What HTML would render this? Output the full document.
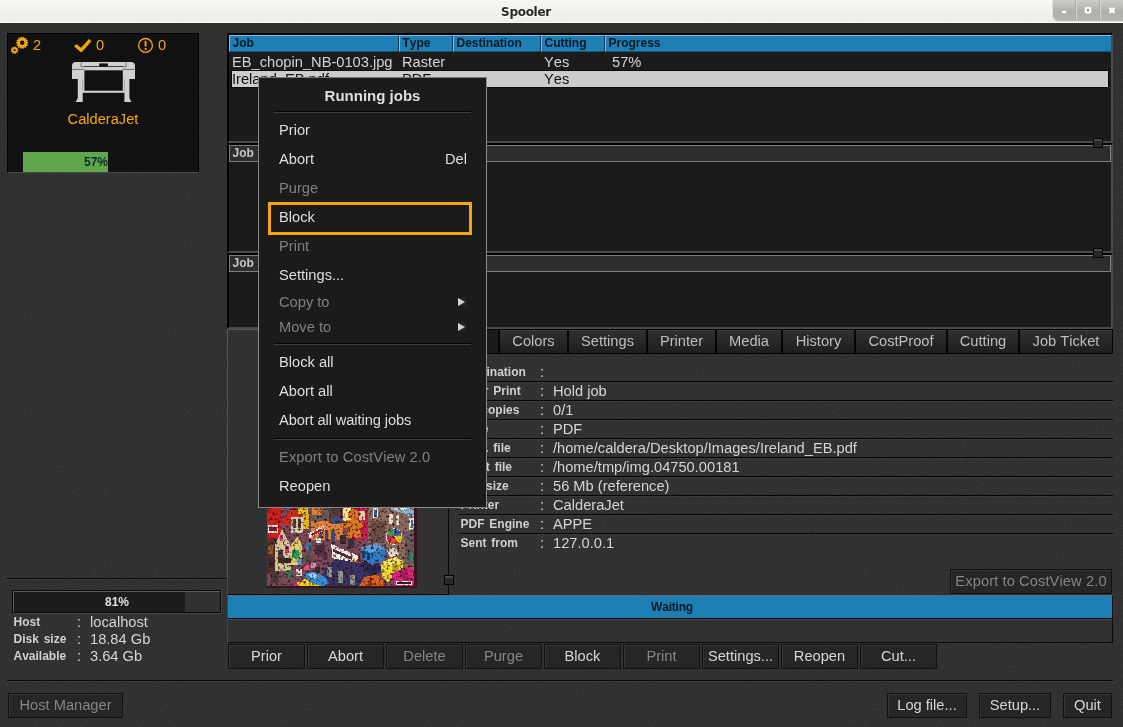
<!DOCTYPE html>
<html>
<head>
<meta charset="utf-8">
<title>Spooler</title>
<style>
*{box-sizing:border-box;margin:0;padding:0}
html,body{width:1123px;height:727px;overflow:hidden}
html{background:#2d2e2f}
body{font-kerning:none;position:relative;background:transparent;will-change:transform;font-family:"Liberation Sans",sans-serif;font-size:14.67px;color:#d4d4d4}
.abs{position:absolute}
.tex{background-color:#2d2e2f}
#titlebar{position:absolute;left:0;top:0;width:1123px;height:23px;background:linear-gradient(#f6f6f4,#ededea);border-bottom:1px solid #fbfbfb}
#title{position:absolute;left:0;width:1052px;top:4px;height:16px;line-height:16px;text-align:center;font-family:"DejaVu Sans","Liberation Sans",sans-serif;font-weight:bold;font-size:12px;color:#262626;letter-spacing:-.3px;text-shadow:0 1px 0 #fff}
#winbtns{position:absolute;left:1052px;top:0;width:71px;height:22px;background:linear-gradient(#cccbc8,#aeadaa 60%,#bab9b6);border-bottom-left-radius:6px;border-left:1px solid #e2e2e0;border-bottom:1px solid #e2e2e0}
#winbtns i{position:absolute;top:0;width:1px;height:20px;background:#d6d6d4;box-shadow:-1px 0 0 #a9a8a5}
#main{position:absolute;left:0;top:23px;width:1123px;height:704px}
.panel{position:absolute;left:227px;width:886px;background:#1b1b1b;border:2px solid #000;border-right-color:#4b4b4b;border-bottom-color:#4b4b4b}
.hdr{position:absolute;height:17px;font-weight:bold;font-size:12px;line-height:14px;padding-left:2.5px;white-space:nowrap;overflow:hidden}
.hdr.blue{background:#1d7fb4;color:#0a1a27;border-top:1px solid #79c0e8;border-left:1px solid #79c0e8;border-right:1px solid #0c3a56;border-bottom:1px solid #12587f}
.hdr.gray{background:#2d2d2d;color:#c4c4c4;border:1px solid #7d7d7d;line-height:14px}
.cell{position:absolute;white-space:nowrap;line-height:17px;height:17px}
.handle{position:absolute;width:10px;height:10px;background:#282828;border:1px solid #050505;box-shadow:inset 0 2px 0 #484848}
.btn{position:absolute;height:25px;border:1px solid #111;background:#262626;color:#d6d6d6;line-height:22px;text-align:center;box-shadow:inset 1px 1px 0 #363636;white-space:nowrap}
.btn.dis{color:#858585}
.tab{position:absolute;top:329px;height:25px;border:1px solid #050505;background:linear-gradient(#303030,#1e1e1e);color:#bdbdbd;line-height:22px;text-align:center;box-shadow:inset 0 1px 0 #3c3c3c;white-space:nowrap}
.irow{position:absolute;left:459px;width:654px;height:19px;border-bottom:1px solid #050505;box-shadow:0 1px 0 #3a3a3a}
.irow b{word-spacing:1.5px;position:absolute;left:1.5px;top:2px;font-size:12px;line-height:15px;color:#cfcfcf;white-space:nowrap}
.irow i{position:absolute;left:81px;top:0;font-style:normal;line-height:19px}
.irow span{position:absolute;left:94px;top:0;line-height:19px;white-space:nowrap}
.hl{position:absolute;height:2px;background:#0a0a0a;border-bottom:1px solid #3b3b3b}
#menu{position:absolute;left:258px;top:77px;width:229px;height:431px;background:#1b1b1b;border:1px solid #8c8c8c;border-top-color:#777}
.mi{position:absolute;left:20px;color:#dedede;white-space:nowrap;line-height:17px;height:17px}
.mi.dis{color:#808080}
.msep{position:absolute;left:15px;width:197px;height:2px;background:#060606;border-bottom:1px solid #3c3c3c}
.arr{position:absolute;left:199px;width:8px;height:8px;background:#262626}
.arr:before{content:"";position:absolute;left:0;top:0;width:0;height:0;border-left:7px solid #d2d2d2;border-top:4px solid transparent;border-bottom:4px solid transparent}
.hrow{position:absolute;left:13px;height:17px;line-height:17px;white-space:nowrap}
.hrow b{word-spacing:1.5px;position:absolute;left:.5px;top:0;font-size:12px;color:#d0d0d0}
.hrow i{position:absolute;left:64px;top:0;font-style:normal}
.hrow span{position:absolute;left:77px;top:0}
</style>
</head>
<body>
<div id="main" class="tex"><svg width="1123" height="704" style="position:absolute;left:0;top:0"><defs><filter id="bgn" x="0" y="0" width="100%" height="100%" color-interpolation-filters="sRGB"><feTurbulence type="fractalNoise" baseFrequency="0.9" numOctaves="1" seed="4"/><feColorMatrix type="matrix" values="0 0 0 0 1  0 0 0 0 1  0 0 0 0 1  0 0 0 0.14 -0.055"/></filter></defs><rect width="1123" height="704" fill="#000" filter="url(#bgn)"/></svg></div>
<div id="titlebar"><div id="title">Spooler</div>
<div id="winbtns"><i style="left:23px"></i><i style="left:47px"></i>
<svg class="abs" style="left:0;top:0" width="70" height="20" viewBox="0 0 70 20">
<rect x="9" y="10.8" width="4.3" height="2.5" fill="#fff"/>
<rect x="31.8" y="7.2" width="6.4" height="6.2" fill="#fff"/><rect x="34" y="9.2" width="2" height="2" fill="#77767a"/>
<path d="M56.5 7.8 L61.5 12.8 M61.5 7.8 L56.5 12.8" stroke="#fff" stroke-width="2.6" stroke-linecap="butt"/>
</svg>
</div>
</div>

<!-- PRINTER PANEL -->
<div class="abs" id="printer" style="left:7px;top:33px;width:192px;height:140px;background:#111;border:1px solid #040404;border-bottom-color:#4a4a4a"></div>

<svg class="abs" style="left:0;top:23px" width="210" height="160" viewBox="0 23 210 160">
<path d="M28.28 42.25 L28.28 43.35 L26.78 43.85 L27.91 44.94 L27.44 45.93 L25.87 45.73 L26.42 47.21 L25.56 47.89 L24.24 47.03 L24.09 48.60 L23.02 48.84 L22.20 47.50 L21.38 48.84 L20.31 48.60 L20.16 47.03 L18.84 47.89 L17.98 47.21 L18.53 45.73 L16.96 45.93 L16.49 44.94 L17.62 43.85 L16.12 43.35 L16.12 42.25 L17.62 41.75 L16.49 40.66 L16.96 39.67 L18.53 39.87 L17.98 38.39 L18.84 37.71 L20.16 38.57 L20.31 37.00 L21.38 36.76 L22.20 38.10 L23.02 36.76 L24.09 37.00 L24.24 38.57 L25.56 37.71 L26.42 38.39 L25.87 39.87 L27.44 39.67 L27.91 40.66 L26.78 41.75Z M24.40 42.80 A2.2 2.2 0 1 0 20.00 42.80 A2.2 2.2 0 1 0 24.40 42.80Z" fill="#f5a70a" fill-rule="evenodd"/>
<path d="M18.48 49.85 L18.48 50.55 L17.23 51.16 L17.80 52.43 L17.35 52.97 L16.00 52.62 L15.62 53.96 L14.93 54.09 L14.11 52.96 L12.96 53.74 L12.35 53.39 L12.46 52.00 L11.07 51.86 L10.83 51.20 L11.80 50.20 L10.83 49.20 L11.07 48.54 L12.46 48.40 L12.35 47.01 L12.96 46.66 L14.11 47.44 L14.93 46.31 L15.62 46.44 L16.00 47.78 L17.35 47.43 L17.80 47.97 L17.23 49.24Z M15.70 50.20 A1.1 1.1 0 1 0 13.50 50.20 A1.1 1.1 0 1 0 15.70 50.20Z" fill="#f5a70a" fill-rule="evenodd"/>
<path d="M75.2 45.2 L81.2 50.2 L90.2 40.2" fill="none" stroke="#f5a70a" stroke-width="3.4"/>
<circle cx="145.5" cy="45.4" r="6.9" fill="none" stroke="#f5a70a" stroke-width="1.3"/>
<rect x="144.6" y="40.8" width="1.9" height="5.8" fill="#f5a70a"/><rect x="144.6" y="48" width="1.9" height="1.9" fill="#f5a70a"/>
<!-- printer icon -->
<g fill="#d0d0d0">
<path d="M72 79 L72 66 Q72 62 76 62 L84 62 L84 79 Z"/>
<path d="M135 79 L135 66 Q135 62 131 62 L123.3 62 L123.3 79 Z"/>
<path d="M82.3 62 L124.8 62 L125.6 66.2 L81.5 66.2 Z"/>
<rect x="84" y="67" width="39.5" height="3.3"/>
<path d="M77.8 79 L82.7 79 L82.7 102 L75.6 102 L77.8 98 Z"/>
<path d="M129.4 79 L124.4 79 L124.4 102 L131.4 102 L129.4 98 Z"/>
<rect x="82.7" y="70" width="1.7" height="21.5"/>
<rect x="122.8" y="70" width="1.7" height="21.5"/>
<rect x="82" y="90.7" width="43.2" height="2.1"/>
</g>
<rect x="99.2" y="63.4" width="8.7" height="3.2" fill="#111"/>
<rect x="72" y="68.9" width="12.4" height="0.8" fill="#555"/><rect x="122.8" y="68.9" width="12.2" height="0.8" fill="#555"/>
<path d="M81.5 62.4 L80.8 66.6 L84.4 66.6" fill="none" stroke="#555" stroke-width=".7"/>
<path d="M125.6 62.4 L126.3 66.6 L122.8 66.6" fill="none" stroke="#555" stroke-width=".7"/>
</svg>
<div class="abs" style="left:33px;top:37px;color:#f5a70a;line-height:17px">2</div>
<div class="abs" style="left:96px;top:37px;color:#f5a70a;line-height:17px">0</div>
<div class="abs" style="left:158px;top:37px;color:#f5a70a;line-height:17px">0</div>
<div class="abs" style="left:8px;top:111px;width:190px;text-align:center;color:#f5a70a;line-height:17px">CalderaJet</div>
<div class="abs" style="left:23px;top:152px;width:85px;height:20px;background:#60a64d;overflow:hidden"><div class="abs" style="left:61px;top:2px;font-weight:bold;font-size:12px;line-height:16px;color:#0c2a2a;white-space:nowrap">57%</div></div>


<!-- JOB LISTS -->
<div class="panel" style="top:33px;height:110px"></div>
<div class="panel" style="top:143px;height:110px"></div>
<div class="panel" style="top:253px;height:76px"></div>

<div class="hdr blue" style="left:229px;top:35px;width:170px">Job</div>
<div class="hdr blue" style="left:399px;top:35px;width:54px">Type</div>
<div class="hdr blue" style="left:453px;top:35px;width:88px">Destination</div>
<div class="hdr blue" style="left:541px;top:35px;width:64px">Cutting</div>
<div class="hdr blue" style="left:605px;top:35px;width:506px;border-right:none">Progress</div>
<div class="abs" style="left:232px;top:71px;width:876px;height:16px;background:#cccccc;box-shadow:0 0 0 1px #0b0b0b"></div>
<div class="cell" style="left:232px;top:54px">EB_chopin_NB-0103.jpg</div>
<div class="cell" style="left:402px;top:54px">Raster</div>
<div class="cell" style="left:544px;top:54px">Yes</div>
<div class="cell" style="left:612px;top:54px">57%</div>
<div class="cell" style="left:232px;top:71px;color:#111">Ireland_EB.pdf</div>
<div class="cell" style="left:402px;top:71px;color:#111">PDF</div>
<div class="cell" style="left:544px;top:71px;color:#111">Yes</div>
<div class="hdr gray" style="left:229px;top:145px;width:882px">Job</div>
<div class="hdr gray" style="left:229px;top:255px;width:882px">Job</div>
<div class="handle" style="left:1093px;top:138px"></div>
<div class="handle" style="left:1093px;top:248px"></div>


<div class="abs" style="left:227px;top:329px;width:222px;height:266px;border-left:1px solid #555;border-top:1px solid #555;border-bottom:1px solid #0a0a0a"></div>
<div class="abs" style="left:448px;top:329px;width:1px;height:266px;background:#0a0a0a"></div>
<div class="tab" style="left:449px;width:50px;background:#1a1a1a;box-shadow:none">Job</div>
<div class="tab" style="left:499px;width:69px">Colors</div>
<div class="tab" style="left:568px;width:79px">Settings</div>
<div class="tab" style="left:647px;width:69px">Printer</div>
<div class="tab" style="left:716px;width:66px">Media</div>
<div class="tab" style="left:782px;width:73px">History</div>
<div class="tab" style="left:855px;width:92px">CostProof</div>
<div class="tab" style="left:947px;width:72px">Cutting</div>
<div class="tab" style="left:1019px;width:94px">Job Ticket</div>
<div class="irow" style="top:363px"><b>Destination</b><i>:</i><span></span></div>
<div class="irow" style="top:382px"><b>After Print</b><i>:</i><span>Hold job</span></div>
<div class="irow" style="top:401px"><b>Nb copies</b><i>:</i><span>0/1</span></div>
<div class="irow" style="top:420px"><b>Type</b><i>:</i><span>PDF</span></div>
<div class="irow" style="top:439px"><b>Orig. file</b><i>:</i><span>/home/caldera/Desktop/Images/Ireland_EB.pdf</span></div>
<div class="irow" style="top:458px"><b>Input file</b><i>:</i><span>/home/tmp/img.04750.00181</span></div>
<div class="irow" style="top:477px"><b>File size</b><i>:</i><span>56 Mb (reference)</span></div>
<div class="irow" style="top:496px"><b>Printer</b><i>:</i><span>CalderaJet</span></div>
<div class="irow" style="top:515px"><b>PDF Engine</b><i>:</i><span>APPE</span></div>
<div class="irow" style="top:534px;border-bottom:none;box-shadow:none"><b>Sent from</b><i>:</i><span>127.0.0.1</span></div>
<div class="handle" style="left:444px;top:575px"></div>
<div class="btn dis" style="letter-spacing:.1px;left:950px;top:569px;width:162px">Export to CostView 2.0</div>
<div class="abs" style="left:228px;top:595px;width:885px;height:24px;background:#1d7fb4;border-top:1px solid #5a6a74;border-bottom:1px solid #080808;border-right:1px solid #0a0a0a;padding-left:4px;letter-spacing:-.2px;text-align:center;font-weight:bold;font-size:12px;line-height:22px;color:#0a1a27">Waiting</div>
<div class="abs" style="left:228px;top:619px;width:885px;height:24px;border-top:1px solid #484848;border-bottom:1px solid #0a0a0a;border-right:1px solid #0a0a0a"></div>
<div class="abs" style="left:227px;top:579px;width:1px;height:64px;background:#474747"></div>
<div class="btn" style="left:228px;top:644px;width:77px">Prior</div>
<div class="btn" style="left:307px;top:644px;width:77px">Abort</div>
<div class="btn dis" style="left:386px;top:644px;width:77px">Delete</div>
<div class="btn dis" style="left:465px;top:644px;width:77px">Purge</div>
<div class="btn" style="left:544px;top:644px;width:77px">Block</div>
<div class="btn dis" style="left:623px;top:644px;width:77px">Print</div>
<div class="btn" style="left:702px;top:644px;width:77px">Settings...</div>
<div class="btn" style="left:781px;top:644px;width:77px">Reopen</div>
<div class="btn" style="left:860px;top:644px;width:77px">Cut...</div>
<div class="hl" style="left:7px;top:578px;width:220px"></div>
<div class="hl" style="left:7px;top:680px;width:1106px"></div>
<div class="abs" style="left:12px;top:590px;width:209px;height:23px;border:1px solid #080808;background:#303133;box-shadow:1px 1px 0 #474747"><div class="abs" style="left:0;top:0;width:207px;height:21px;border-top:1px solid #5c5c5c;border-left:1px solid #5c5c5c"></div><div class="abs" style="left:1px;top:1px;width:171px;height:20px;background:#1c1c1c"></div><div class="abs" style="left:0;top:1px;width:208px;text-align:center;font-weight:bold;font-size:12px;line-height:21px;color:#e0e0e0">81%</div></div>
<div class="hrow" style="top:614px"><b>Host</b><i>:</i><span>localhost</span></div>
<div class="hrow" style="top:631px"><b>Disk size</b><i>:</i><span>18.84 Gb</span></div>
<div class="hrow" style="top:648px"><b>Available</b><i>:</i><span>3.64 Gb</span></div>
<div class="btn dis" style="left:8px;top:693px;width:115px">Host Manager</div>
<div class="btn" style="left:887px;top:693px;width:80px">Log file...</div>
<div class="btn" style="left:979px;top:693px;width:72px">Setup...</div>
<div class="btn" style="left:1063px;top:693px;width:49px">Quit</div>


<svg class="abs" style="left:267px;top:438px;width:150px;height:150px" viewBox="35 -452 1050 1050" preserveAspectRatio="none" shape-rendering="crispEdges">
<rect x="35" y="-452" width="1050" height="1050" fill="#7b4a5a"/>
<rect x="35" y="-452" width="1050" height="484" fill="#8a6a5c"/>
<!-- left reds -->
<rect x="35" y="32" width="100" height="220" fill="#d4211b"/>
<polygon points="135,130 215,38 300,105 290,160 150,160" fill="#d12a1d"/>
<rect x="40" y="160" width="75" height="50" fill="#f0e6e0"/>
<rect x="48" y="170" width="60" height="30" fill="#7a2020"/>
<rect x="250" y="32" width="75" height="45" fill="#efbf12"/>
<rect x="290" y="77" width="40" height="110" fill="#e8b818"/>
<rect x="200" y="100" width="90" height="110" fill="#d9d0b0"/>
<rect x="215" y="115" width="20" height="60" fill="#5a3a30"/><rect x="250" y="115" width="20" height="60" fill="#5a3a30"/>
<!-- gray roof and orange building -->
<polygon points="330,32 480,32 470,110 400,150 340,120" fill="#6b5a58"/>
<rect x="350" y="40" width="60" height="50" fill="#e08038"/>
<rect x="340" y="130" width="225" height="135" fill="#e2853c"/>
<rect x="470" y="40" width="90" height="100" fill="#5b3d38"/>
<rect x="480" y="100" width="70" height="50" fill="#40507a"/>
<rect x="400" y="195" width="22" height="60" fill="#3a4a70"/><rect x="440" y="195" width="22" height="70" fill="#3a4a70"/><rect x="485" y="200" width="25" height="70" fill="#3a4a70"/>
<polygon points="325,215 430,160 440,190 330,250" fill="#f2ece8"/>
<polygon points="345,220 420,182 425,195 350,236" fill="#b02030"/>
<!-- gingerbread -->
<rect x="570" y="32" width="55" height="100" fill="#f5e488"/>
<rect x="625" y="32" width="115" height="230" fill="#c8204e"/>
<circle cx="640" cy="85" r="38" fill="#e07a20"/>
<polygon points="590,120 690,120 710,170 680,180 700,250 650,250 640,200 625,250 590,240 610,180 575,175" fill="#e07a20"/>
<rect x="680" y="60" width="40" height="60" fill="#f0d0a0"/>
<!-- cathedral -->
<polygon points="740,32 1065,32 1065,470 900,420 860,300 740,280" fill="#8b6c60"/>
<polygon points="860,32 1065,32 1065,105" fill="#8fb4cc"/>
<ellipse cx="970" cy="42" rx="45" ry="12" fill="#dfe8f0"/>
<rect x="775" y="40" width="40" height="70" fill="#efe8e0"/><rect x="785" y="55" width="20" height="45" fill="#3060a0"/>
<rect x="890" y="80" width="25" height="70" fill="#e8e0c8"/><rect x="935" y="90" width="25" height="70" fill="#e8e0c8"/>
<rect x="1030" y="110" width="35" height="80" fill="#e8e8e8"/><rect x="1040" y="125" width="18" height="55" fill="#3a6a8a"/>
<rect x="760" y="130" width="100" height="150" fill="#6e5048"/>
<rect x="1000" y="200" width="65" height="230" fill="#6a5a60"/>
<rect x="1035" y="350" width="22" height="60" fill="#2a8a6a"/>
<circle cx="925" cy="238" r="58" fill="#e8e0d0"/>
<path d="M925 238 L925 185 A53 53 0 0 1 975 222Z" fill="#3a60b0"/>
<path d="M925 238 L975 222 A53 53 0 0 1 955 282Z" fill="#e8c820"/>
<path d="M925 238 L955 282 A53 53 0 0 1 895 282Z" fill="#e05020"/>
<path d="M925 238 L895 282 A53 53 0 0 1 874 225Z" fill="#d02060"/>
<path d="M925 238 L874 225 A53 53 0 0 1 925 185Z" fill="#40a040"/>
<!-- left houses -->
<polygon points="35,250 100,250 100,480 35,500" fill="#5a3324"/>
<polygon points="90,300 140,185 200,300 200,480 90,480" fill="#d8c992"/>
<polygon points="200,300 250,240 280,300 280,440 200,440" fill="#e0cf70"/>
<rect x="125" y="225" width="25" height="45" fill="#d8308a"/>
<rect x="160" y="305" width="28" height="50" fill="#d8308a"/>
<rect x="210" y="335" width="50" height="55" fill="#2a9a50"/>
<rect x="115" y="330" width="35" height="70" fill="#4a3a40"/>
<rect x="110" y="385" width="90" height="40" fill="#3a2a2a"/>
<rect x="40" y="300" width="40" height="60" fill="#8a5a30"/><rect x="40" y="390" width="45" height="70" fill="#3a2a3a"/>
<!-- street people -->
<rect x="310" y="280" width="30" height="55" fill="#4a7a9a"/><rect x="375" y="245" width="35" height="40" fill="#e8e8f0"/>
<rect x="370" y="300" width="70" height="70" fill="#4a3040"/><rect x="300" y="365" width="35" height="50" fill="#3a5a3a"/>
<rect x="345" y="420" width="35" height="40" fill="#e890b0"/><rect x="250" y="385" width="30" height="50" fill="#5a90b0"/>
<rect x="420" y="350" width="40" height="50" fill="#5a3a4a"/><rect x="545" y="230" width="40" height="60" fill="#4a3030"/>
<rect x="600" y="255" width="45" height="65" fill="#3a3038"/><rect x="370" y="450" width="35" height="45" fill="#3a2a30"/>
<rect x="165" y="470" width="40" height="60" fill="#3a7a5a"/><rect x="235" y="465" width="45" height="50" fill="#e8d8d0"/>
<rect x="60" y="480" width="60" height="80" fill="#4a3a3a"/><rect x="295" y="440" width="35" height="30" fill="#e05080"/>
<!-- banner -->
<polygon points="485,290 670,372 665,455 490,385" fill="#f6f2ec"/>
<polygon points="500,325 630,382 628,400 500,345" fill="#5a2a3a"/>
<rect x="640" y="385" width="14" height="40" fill="#e8a020"/>
<!-- purple church -->
<polygon points="430,470 520,395 690,425 780,380 850,470 700,582 440,582" fill="#3b3262"/>
<polygon points="690,425 780,380 850,470 760,520" fill="#2e2850"/>
<rect x="455" y="450" width="35" height="70" fill="#8a9a90"/><rect x="530" y="480" width="35" height="80" fill="#8a9a90"/><rect x="615" y="510" width="35" height="70" fill="#8a9a90"/>
<!-- cubes -->
<polygon points="690,315 800,285 862,320 862,400 770,440 690,380" fill="#2f7fc8"/>
<polygon points="690,315 800,285 862,320 760,350" fill="#5aa0e0"/>
<rect x="700" y="340" width="18" height="50" fill="#1a3a6a"/><rect x="735" y="350" width="18" height="55" fill="#1a3a6a"/>
<polygon points="870,330 930,315 960,360 900,385" fill="#e0d8c0"/>
<polygon points="832,420 935,378 985,410 985,480 900,540 880,560 840,520" fill="#f0da32"/>
<polygon points="832,420 935,378 985,410 890,450" fill="#f8e860"/>
<rect x="915" y="440" width="45" height="40" fill="#b8a020"/>
<polygon points="905,500 1020,445 1065,480 1065,582 930,582" fill="#e2207c"/>
<polygon points="960,490 1010,470 1040,540 1000,555" fill="#b01860"/>
<rect x="935" y="552" width="115" height="22" fill="#fff"/><rect x="945" y="557" width="95" height="12" fill="#222"/>
<polygon points="680,582 720,520 800,505 845,540 845,582" fill="#e2601f"/>
<polygon points="740,582 760,520 770,520 765,582" fill="#8a3a10"/>
<!-- car and yellow -->
<polygon points="300,500 350,478 440,520 470,560 440,582 330,582" fill="#2f8fd8"/>
<polygon points="320,505 355,490 400,520 360,535" fill="#9ad0f0"/>
<polygon points="245,560 300,535 400,582 250,582" fill="#f0d21e"/>
<polygon points="200,582 240,565 260,582" fill="#e0208a"/>
<defs><filter id="nf" x="0" y="0" width="100%" height="100%" color-interpolation-filters="sRGB"><feTurbulence type="fractalNoise" baseFrequency="0.055" numOctaves="2" seed="7"/><feColorMatrix type="matrix" values="0 0 0 0 0.15  0 0 0 0 0.06  0 0 0 0 0.08  0 0 0 3.4 -1.75"/></filter></defs>
<rect x="35" y="32" width="1030" height="550" fill="#000" filter="url(#nf)"/>
<!-- frame -->
<rect x="1065" y="-452" width="20" height="1050" fill="#38141a"/>
<rect x="35" y="582" width="1050" height="16" fill="#38141a"/>
</svg>
<div id="menu">
<div class="abs" style="left:0;top:9px;width:227px;text-align:center;font-weight:bold;font-size:15px;line-height:17px;color:#dedede">Running jobs</div>
<div class="msep" style="top:33px"></div>
<div class="mi" style="top:44px">Prior</div>
<div class="mi" style="top:73px">Abort</div>
<div class="mi dis" style="top:102px">Purge</div>
<div class="mi" style="top:131px">Block</div>
<div class="mi dis" style="top:160px">Print</div>
<div class="mi" style="top:189px">Settings...</div>
<div class="mi dis" style="top:216px">Copy to</div>
<div class="mi dis" style="top:241px">Move to</div>
<div class="mi" style="top:276px">Block all</div>
<div class="mi" style="top:305px">Abort all</div>
<div class="mi" style="letter-spacing:-.1px;top:334px">Abort all waiting jobs</div>
<div class="mi dis" style="letter-spacing:.1px;top:371px">Export to CostView 2.0</div>
<div class="mi" style="top:400px">Reopen</div>
<div class="mi" style="left:auto;right:19px;top:73px">Del</div>
<div class="abs" style="left:9px;top:124px;width:204px;height:33px;border:3px solid #f5a70a"></div>
<div class="arr" style="top:220px"></div><div class="arr" style="top:245px"></div>
<div class="msep" style="top:265px"></div>
<div class="msep" style="top:360px"></div>
</div>
</body>
</html>
